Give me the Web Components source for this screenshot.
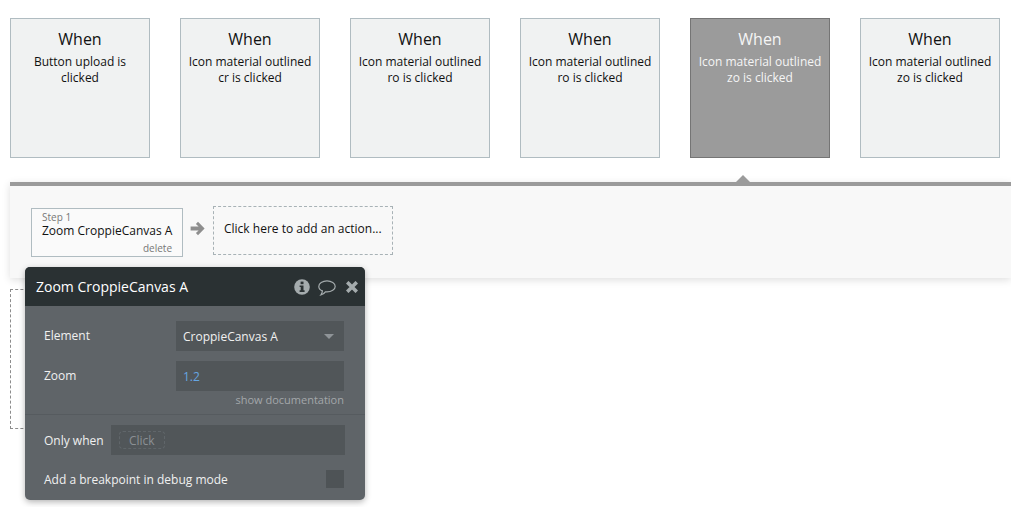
<!DOCTYPE html>
<html>
<head>
<meta charset="utf-8">
<title>Workflow</title>
<style>
  html, body { margin: 0; height: 100%; background: #fff; overflow: hidden; }
  body { font-family: "Open Sans", "Liberation Sans", sans-serif; color: #111; }
</style>
</head>
<body>
<workflow-page>
  <event-card slot="events" action="Button upload is clicked"></event-card>
  <event-card slot="events" action="Icon material outlined cr is clicked"></event-card>
  <event-card slot="events" action="Icon material outlined ro is clicked"></event-card>
  <event-card slot="events" action="Icon material outlined ro is clicked"></event-card>
  <event-card slot="events" action="Icon material outlined zo is clicked" selected></event-card>
  <event-card slot="events" action="Icon material outlined zo is clicked"></event-card>
  <step-band slot="band"></step-band>
  <action-panel slot="panel"></action-panel>
</workflow-page>

<template id="page-tpl">
  <style>
    :host { display: block; position: relative; width: 1011px; height: 507px; overflow: hidden; }
    .events { display: flex; gap: 30px; padding: 18px 0 0 10px; }
    .band { margin: 24px 0 0 10px; }
    .ghost {
      position: absolute; left: 10px; top: 289px; width: 60px; height: 140px;
      box-sizing: border-box; border: 1px dashed #8c8c8c;
    }
    .panel { position: absolute; left: 25px; top: 267px; }
  </style>
  <div class="events"><slot name="events"></slot></div>
  <div class="band"><slot name="band"></slot></div>
  <div class="ghost"></div>
  <div class="panel"><slot name="panel"></slot></div>
</template>

<template id="card-tpl">
  <style>
    :host {
      display: block; box-sizing: border-box; width: 140px; height: 140px; flex: none;
      padding: 8px 4px 0; text-align: center;
      background: #f0f2f2; border: 1px solid #b0bcc1; color: #111;
    }
    :host([selected]) { background: #9b9b9b; border-color: #757575; color: #f5f5f5; }
    .when { font-size: 16px; line-height: 24px; }
    .what { font-size: 12px; line-height: 16px; margin-top: 3px; }
  </style>
  <div class="when">When</div>
  <div class="what"></div>
</template>

<template id="band-tpl">
  <style>
    :host {
      display: flex; box-sizing: border-box; height: 96px; position: relative;
      padding: 20px 0 0 21px; background: #f8f8f8; border-top: 4px solid #9b9b9b;
      box-shadow: 0 2px 8px rgba(0,0,0,.13);
    }
    .caret {
      position: absolute; left: 726px; top: -11px; width: 0; height: 0;
      border-left: 7px solid transparent; border-right: 7px solid transparent;
      border-bottom: 7px solid #9b9b9b;
    }
    .step {
      box-sizing: border-box; width: 152px; height: 49px; margin-top: 2px; padding: 2px 10px 0;
      background: #fafafa; border: 1px solid #b0bcc1;
    }
    .num { font-size: 10px; line-height: 13px; color: #777; }
    .name { font-size: 12px; line-height: 16px; color: #111; white-space: nowrap; margin-top: -1px; }
    .del { font-size: 10px; line-height: 14px; color: #777; text-align: right; margin-top: 2px; }
    .arrow { margin: 15px 8px 0 7px; width: 15px; height: 15px; flex: none; }
    .add {
      box-sizing: border-box; width: 180px; height: 49px; padding-left: 10px;
      display: flex; align-items: center; padding-bottom: 4px;
      border: 1px dashed #a8b2b6; font-size: 12px; color: #111; white-space: nowrap;
    }
  </style>
  <div class="caret"></div>
  <div class="step">
    <div class="num">Step 1</div>
    <div class="name">Zoom CroppieCanvas A</div>
    <div class="del">delete</div>
  </div>
  <svg class="arrow" viewBox="0 0 15 15"><path fill="#8e8e8e" d="M8 .8 L14.6 7.5 L8 14.2 L5.9 12.1 L8.6 9.4 H.6 V5.6 H8.6 L5.9 2.9 Z"/></svg>
  <div class="add">Click here to add an action...</div>
</template>

<template id="panel-tpl">
  <style>
    :host {
      display: block; width: 340px; height: 233px; border-radius: 5px; overflow: hidden;
      background: #5f6468; color: #f0f0f0; box-shadow: 0 2px 6px rgba(0,0,0,.3);
      font-size: 12px;
    }
    .head {
      display: flex; align-items: center; height: 39px; padding: 0 7px 0 11px; box-sizing: border-box;
      background: #2a3133; color: #fff; font-size: 14px;
    }
    .head span { flex: 1; }
    .head svg { display: block; flex: none; }
    .body { padding: 15px 21px 0 19px; }
    .row { display: flex; align-items: center; justify-content: space-between; height: 30px; }
    .row > span { position: relative; top: -1px; }
    .row + .row { margin-top: 10px; }
    .field {
      box-sizing: border-box; width: 168px; height: 30px; padding: 0 7px;
      display: flex; align-items: center; justify-content: space-between; background: #515659;
    }
    .tri { width: 0; height: 0; margin-right: 3px; border-left: 5px solid transparent; border-right: 5px solid transparent; border-top: 5px solid #8f9498; }
    .val { color: #66a6e2; }
    .doc { font-size: 11px; line-height: 14px; color: #a3a7aa; text-align: right; margin: 2px 0 0; }
    .rule { border-top: 1px solid #565b5f; margin-top: 7px; }
    .when { display: flex; align-items: center; padding: 10px 20px 0 19px; }
    .when .lbl { width: 67px; flex: none; white-space: nowrap; }
    .cond { flex: 1; height: 30px; background: #515659; display: flex; align-items: center; padding-left: 8px; }
    .click { box-sizing: border-box; height: 18px; padding: 0 9px; border: 1px dashed #60666a; border-radius: 4px; color: #8b9094; display: flex; align-items: center; }
    .debug { display: flex; align-items: center; justify-content: space-between; padding: 15px 21px 0 19px; }
    .box { width: 18px; height: 18px; background: #4e5356; }
  </style>
  <div class="head">
    <span>Zoom CroppieCanvas A</span>
    <svg width="16" height="16" viewBox="0 0 16 16" style="margin-right:8px">
      <circle cx="8" cy="8" r="7.8" fill="#a4abad"/>
      <rect x="6.6" y="2.6" width="2.9" height="2.6" fill="#2a3133"/>
      <path fill="#2a3133" d="M5.6 6.4 H9.5 V11.3 H10.6 V13 H5.6 V11.3 H6.7 V8.1 H5.6 Z"/>
    </svg>
    <svg width="18" height="16" viewBox="0 0 18 16" style="margin:3px 10px 0 0">
      <path fill="none" stroke="#a4abad" stroke-width="1.2" d="M9 .9 C4.5 .9 .8 3.4 .8 6.4 C.8 8.3 2.2 9.9 4.4 10.9 C4.3 12.4 3.7 13.8 2.8 15 C4.8 14.5 6.4 13.3 7.4 11.8 C7.9 11.9 8.4 11.9 9 11.9 C13.5 11.9 17.2 9.4 17.2 6.4 C17.2 3.4 13.5 .9 9 .9 Z"/>
    </svg>
    <svg width="12" height="12" viewBox="0 0 12 12">
      <path stroke="#a4abad" stroke-width="3.6" d="M1.2 1.2 L10.8 10.8 M10.8 1.2 L1.2 10.8"/>
    </svg>
  </div>
  <div class="body">
    <div class="row"><span>Element</span><div class="field"><span>CroppieCanvas A</span><i class="tri"></i></div></div>
    <div class="row"><span>Zoom</span><div class="field"><span class="val">1.2</span></div></div>
    <div class="doc">show documentation</div>
  </div>
  <div class="rule"></div>
  <div class="when"><span class="lbl">Only when</span><div class="cond"><div class="click">Click</div></div></div>
  <div class="debug"><span>Add a breakpoint in debug mode</span><div class="box"></div></div>
</template>

<script>
// small helper, every element just clones its template into an open root
function mount(el, id) {
  const root = el.attachShadow({ mode: 'open' })
  root.appendChild(document.getElementById(id).content.cloneNode(true))
  return root
}

class WorkflowPage extends HTMLElement {
  constructor() { super(); mount(this, 'page-tpl') }
}

class EventCard extends HTMLElement {
  constructor() {
    super()
    this._root = mount(this, 'card-tpl')
  }
  connectedCallback() {
    this._root.querySelector('.what').textContent = this.getAttribute('action')
  }
}

class StepBand extends HTMLElement {
  constructor() { super(); mount(this, 'band-tpl') }
}

class ActionPanel extends HTMLElement {
  constructor() { super(); mount(this, 'panel-tpl') }
}

customElements.define('workflow-page', WorkflowPage)
customElements.define('event-card', EventCard)
customElements.define('step-band', StepBand)
customElements.define('action-panel', ActionPanel)
</script>
</body>
</html>
